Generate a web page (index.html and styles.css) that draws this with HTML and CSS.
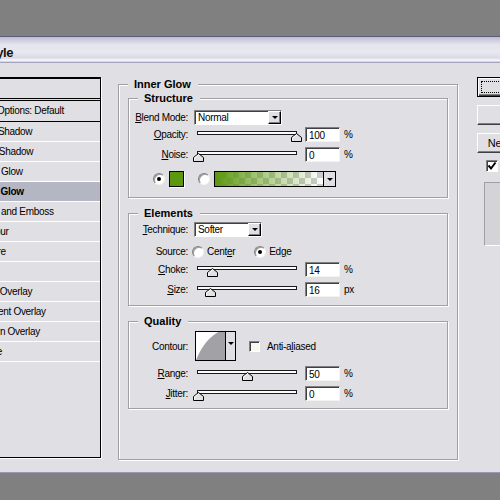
FILE: index.html
```html
<!DOCTYPE html>
<html lang="en">
<head>
  <meta charset="UTF-8" />
  <title>Layer Style</title>
  <link rel="stylesheet" href="styles.css">
</head>
<body>
  <div class="window">
    <div class="titlebar">Layer Style</div>

    <div class="content">
      <ul class="styles">
        <li class="head">Styles</li>
        <li class="blending">Blending Options: Default</li>
        <li class="fx">Drop Shadow</li>
        <li class="fx">Inner Shadow</li>
        <li class="fx">Outer Glow</li>
        <li class="fx selected">Inner Glow</li>
        <li class="fx">Bevel and Emboss</li>
        <li class="fx">Contour</li>
        <li class="fx">Texture</li>
        <li class="fx">Satin</li>
        <li class="fx">Color Overlay</li>
        <li class="fx">Gradient Overlay</li>
        <li class="fx">Pattern Overlay</li>
        <li class="fx">Stroke</li>
      </ul>

      <fieldset class="group main">
        <legend>Inner Glow</legend>

        <fieldset class="group structure">
          <legend>Structure</legend>
          <div class="row">
            <span class="lbl"><u>B</u>lend Mode:</span>
            <div class="select blend"><span class="value">Normal</span><span class="drop"><i class="arrow"></i></span></div>
          </div>
          <div class="row mt2">
            <span class="lbl"><u>O</u>pacity:</span>
            <div class="slider"><div class="track">
              <svg class="thumb" style="left: 100%" width="11" height="9" viewBox="0 0 11 9"><path d="M0.5 8.5V4.5L5.5 0.5L10.5 4.5V8.5Z" fill="#e2e2e2" stroke="#000"/><path d="M1.5 7.5V5L5.5 1.8" fill="none" stroke="#fff"/></svg>
            </div></div>
            <div class="field">100</div><span class="unit">%</span>
          </div>
          <div class="row mt5">
            <span class="lbl"><u>N</u>oise:</span>
            <div class="slider"><div class="track">
              <svg class="thumb" style="left: 0%" width="11" height="9" viewBox="0 0 11 9"><path d="M0.5 8.5V4.5L5.5 0.5L10.5 4.5V8.5Z" fill="#e2e2e2" stroke="#000"/><path d="M1.5 7.5V5L5.5 1.8" fill="none" stroke="#fff"/></svg>
            </div></div>
            <div class="field">0</div><span class="unit">%</span>
          </div>
          <div class="row color-row mt9">
            <span class="radio checked first"></span>
            <span class="swatch"></span>
            <span class="radio second"></span>
            <div class="gradient"><span class="ramp"></span><span class="drop"><i class="arrow"></i></span></div>
          </div>
        </fieldset>

        <fieldset class="group elements">
          <legend>Elements</legend>
          <div class="row">
            <span class="lbl"><u>T</u>echnique:</span>
            <div class="select technique"><span class="value">Softer</span><span class="drop"><i class="arrow"></i></span></div>
          </div>
          <div class="row mt7">
            <span class="lbl">Source:</span>
            <span class="radio source"></span><span class="opt">Cent<u>e</u>r</span>
            <span class="radio source edge checked"></span><span class="opt">Ed<u>g</u>e</span>
          </div>
          <div class="row mt3">
            <span class="lbl"><u>C</u>hoke:</span>
            <div class="slider"><div class="track">
              <svg class="thumb" style="left: 14%" width="11" height="9" viewBox="0 0 11 9"><path d="M0.5 8.5V4.5L5.5 0.5L10.5 4.5V8.5Z" fill="#e2e2e2" stroke="#000"/><path d="M1.5 7.5V5L5.5 1.8" fill="none" stroke="#fff"/></svg>
            </div></div>
            <div class="field">14</div><span class="unit">%</span>
          </div>
          <div class="row mt5">
            <span class="lbl"><u>S</u>ize:</span>
            <div class="slider"><div class="track">
              <svg class="thumb" style="left: 12%" width="11" height="9" viewBox="0 0 11 9"><path d="M0.5 8.5V4.5L5.5 0.5L10.5 4.5V8.5Z" fill="#e2e2e2" stroke="#000"/><path d="M1.5 7.5V5L5.5 1.8" fill="none" stroke="#fff"/></svg>
            </div></div>
            <div class="field">16</div><span class="unit">px</span>
          </div>
        </fieldset>

        <fieldset class="group quality">
          <legend>Quality</legend>
          <div class="row tall">
            <span class="lbl">Contour:</span>
            <div class="contour">
              <svg width="29" height="28" viewBox="0 0 29 28"><path d="M0 28C4 19 9 8 22 0H29V28Z" fill="#a2a2a6"/></svg>
              <span class="drop"><i class="arrow"></i></span>
            </div>
            <span class="check"></span><span class="opt">Anti-a<u>l</u>iased</span>
          </div>
          <div class="row mt5">
            <span class="lbl"><u>R</u>ange:</span>
            <div class="slider"><div class="track">
              <svg class="thumb" style="left: 50%" width="11" height="9" viewBox="0 0 11 9"><path d="M0.5 8.5V4.5L5.5 0.5L10.5 4.5V8.5Z" fill="#e2e2e2" stroke="#000"/><path d="M1.5 7.5V5L5.5 1.8" fill="none" stroke="#fff"/></svg>
            </div></div>
            <div class="field">50</div><span class="unit">%</span>
          </div>
          <div class="row mt5">
            <span class="lbl"><u>J</u>itter:</span>
            <div class="slider"><div class="track">
              <svg class="thumb" style="left: 0%" width="11" height="9" viewBox="0 0 11 9"><path d="M0.5 8.5V4.5L5.5 0.5L10.5 4.5V8.5Z" fill="#e2e2e2" stroke="#000"/><path d="M1.5 7.5V5L5.5 1.8" fill="none" stroke="#fff"/></svg>
            </div></div>
            <div class="field">0</div><span class="unit">%</span>
          </div>
        </fieldset>
      </fieldset>

      <div class="actions">
        <div class="btn default"><span class="focus">OK</span></div>
        <div class="btn">Cancel</div>
        <div class="btn">New Style...</div>
        <div class="preview-row"><span class="check on"><svg width="10" height="10" viewBox="0 0 10 10"><path d="M1.5 4.5L4 7.5L8.5 1.5" fill="none" stroke="#000" stroke-width="2"/></svg></span><span class="opt">Preview</span></div>
        <div class="preview"></div>
      </div>
    </div>
  </div>
</body>
</html>
```

FILE: styles.css
```css
html, body {
  margin: 0;
  height: 100%;
  overflow: hidden;
  background: #808080;
}
body {
  font-family: "Liberation Sans", Arial, sans-serif;
  font-size: 10px;
  letter-spacing: -0.3px;
  color: #000;
}
u {
  text-decoration-thickness: 1px;
  text-underline-offset: 1px;
}

/* window frame */
.window {
  margin: 36px 0 0 -70px;
  width: 660px;
  height: 437px;
  box-sizing: border-box;
  background: #e0dfe3;
  border-top: 1px solid #5c5c7a;
  border-bottom: 1px solid #9898b4;
}
.titlebar {
  height: 26px;
  box-sizing: border-box;
  padding: 8px 0 0 19px;
  font-size: 13px;
  font-weight: bold;
  letter-spacing: -0.5px;
  line-height: 16px;
  color: #111;
  background: linear-gradient(#bcbcd2, #e4e4ee 30%, #e8e8f0 60%, #dadae6 84%, #fafafc 93%, #c8c8dc);
  border-bottom: 1px solid #a4a4c0;
}
.content {
  display: flex;
  align-items: flex-start;
  padding-top: 14px;
}

/* styles list */
.styles {
  list-style: none;
  margin: 0 0 0 10px;
  padding: 0;
  width: 161px;
  height: 381px;
  box-sizing: border-box;
  border: 1px solid #000;
  border-top-width: 2px;
  box-shadow: 1px 1px 0 #fff;
  white-space: nowrap;
  overflow: hidden;
}
.styles li {
  height: 19px;
  line-height: 19px;
  border-bottom: 1px solid #fff;
}
.styles .head {
  border-bottom: 3px double #000;
}
.styles .blending {
  height: 20px;
  line-height: 20px;
  padding-left: 17px;
  border-bottom-color: #000;
}
.styles .fx {
  padding-left: 34px;
}
.styles .selected {
  background: #b5b6c4;
  font-weight: bold;
}

/* group boxes */
.group {
  margin: 0;
  padding: 0;
  min-width: 0;
  border: 1px solid #a0a0a0;
  box-shadow: inset 1px 1px 0 #fff, 1px 1px 0 #fff;
}
.group legend {
  margin-left: 9px;
  padding: 0 7px 0 6px;
  font-size: 11px;
  font-weight: bold;
  letter-spacing: 0;
  line-height: 13px;
  background: #e0dfe3;
}
.main {
  width: 340px;
  box-sizing: border-box;
  margin: 1px 0 0 17px;
  padding-bottom: 50px;
}
.structure,
.elements,
.quality {
  margin: 9px 9px 0;
}
.structure {
  margin-top: 1px;
  padding: 5px 0 10px;
}
.elements {
  padding: 2px 0 8px;
}
.quality {
  padding: 3px 0 7px;
}

/* rows */
.row {
  display: flex;
  align-items: center;
  height: 15px;
}
.row.tall {
  height: 30px;
}
.color-row {
  height: 16px;
}
.mt2 { margin-top: 2px; }
.mt3 { margin-top: 3px; }
.mt5 { margin-top: 5px; }
.mt7 { margin-top: 7px; }
.mt9 { margin-top: 9px; }

.lbl {
  width: 59px;
  text-align: right;
  flex: none;
}
.opt {
  margin-left: 3px;
}
.unit {
  margin-left: 4px;
}

/* controls */
.select {
  display: flex;
  height: 15px;
  box-sizing: border-box;
  margin-left: 6px;
  background: #fff;
  border: 1px solid;
  border-color: #808080 #fff #fff #808080;
  box-shadow: inset 1px 1px 0 #404040;
}
.select.blend { width: 88px; }
.select.technique { width: 68px; }
.select .value {
  flex: 1;
  padding: 1px 0 0 3px;
  line-height: 12px;
}
.drop {
  display: flex;
  align-items: center;
  justify-content: center;
  background: #e0dfe3;
}
.select .drop {
  width: 13px;
  box-sizing: border-box;
  border: 1px solid;
  border-color: #fff #000 #000 #fff;
  box-shadow: inset -1px -1px 0 #808080;
}
.arrow {
  width: 0;
  height: 0;
  border-left: 3px solid transparent;
  border-right: 3px solid transparent;
  border-top: 3px solid #000;
}

.slider {
  width: 110px;
  height: 15px;
  box-sizing: border-box;
  padding: 0 5px;
  margin-left: 4px;
}
.track {
  position: relative;
  margin-top: 4px;
  height: 4px;
  box-sizing: border-box;
  border: 1px solid #1a1a1a;
  background: #fbfbfb;
}
.thumb {
  position: absolute;
  top: 1px;
  margin-left: -5px;
  display: block;
}

.field {
  width: 35px;
  height: 15px;
  box-sizing: border-box;
  margin-left: 3px;
  padding: 1px 0 0 3px;
  line-height: 13px;
  background: #fff;
  border: 1px solid;
  border-color: #808080 #f4f4ee #f4f4ee #808080;
  box-shadow: inset 1px 1px 0 #404040;
}

.radio {
  position: relative;
  width: 12px;
  height: 12px;
  box-sizing: border-box;
  flex: none;
  border-radius: 50%;
  background: #fff;
  border: 1px solid;
  border-color: #808080 #f4f4ee #f4f4ee #808080;
  box-shadow: inset 1px 1px 0 #9a9a9a;
}
.radio.checked::after {
  content: "";
  position: absolute;
  left: 3px;
  top: 3px;
  width: 4px;
  height: 4px;
  border-radius: 50%;
  background: #000;
}
.radio.first { margin-left: 24px; }
.radio.second { margin-left: 14px; }
.radio.source { margin-left: 4px; }
.radio.edge { margin-left: 19px; }

.swatch {
  width: 15px;
  height: 16px;
  box-sizing: border-box;
  margin-left: 4px;
  background: #5b970f;
  border: 1px solid #000;
  box-shadow: 1px 1px 0 #fff;
}
.gradient {
  display: flex;
  width: 122px;
  height: 16px;
  box-sizing: border-box;
  margin-left: 4px;
  border: 1px solid #000;
}
.gradient .ramp {
  flex: 1;
  background:
    linear-gradient(90deg, #5b970f, rgba(91, 151, 15, 0.55) 40%, rgba(91, 151, 15, 0)),
    repeating-conic-gradient(#cdcdcd 0 25%, #fff 0 50%) 0 0 / 12px 12px;
}
.gradient .drop {
  width: 11px;
  border-left: 1px solid #000;
}

.contour {
  display: flex;
  width: 41px;
  height: 30px;
  box-sizing: border-box;
  margin-left: 7px;
  background: #fff;
  border: 1px solid #000;
}
.contour svg {
  display: block;
}
.contour .drop {
  flex: 1;
  border-left: 1px solid #000;
  align-items: flex-start;
  padding-top: 10px;
}

.check {
  display: flex;
  align-items: center;
  justify-content: center;
  width: 11px;
  height: 11px;
  box-sizing: border-box;
  margin-left: 13px;
  background: #f8f8f2;
  border: 1px solid;
  border-color: #808080 #fff #fff #808080;
  box-shadow: inset 1px 1px 0 #404040;
}
.quality .opt {
  margin-left: 7px;
}

/* buttons on the right */
.actions {
  display: flex;
  flex-direction: column;
  margin-left: 19px;
  width: 100px;
}
.btn {
  width: 80px;
  height: 20px;
  box-sizing: border-box;
  margin-bottom: 8px;
  font-size: 11px;
  letter-spacing: 0;
  line-height: 18px;
  text-align: center;
  white-space: nowrap;
  border: 1px solid;
  border-color: #fff #404040 #404040 #fff;
  box-shadow: inset -1px -1px 0 #808080;
}
.btn.default {
  border-color: #000;
  box-shadow: inset 1px 1px 0 #fff, inset -1px -1px 0 #404040, inset -2px -2px 0 #808080;
}
.btn .focus {
  display: block;
  margin: 3px;
  height: 12px;
  box-sizing: border-box;
  border: 1px dotted #000;
  line-height: 10px;
  color: #000;
}
.preview-row {
  display: flex;
  align-items: center;
  margin: -1px 0 0 9px;
  font-size: 11px;
  letter-spacing: 0;
}
.preview-row .check {
  width: 12px;
  height: 12px;
  margin-left: 0;
  background: #fff;
}
.preview-row .opt {
  margin-left: 6px;
}
.preview {
  width: 60px;
  height: 64px;
  margin: 10px 0 0 7px;
  box-sizing: border-box;
  background: #d4d4d7;
  border: 1px solid;
  border-color: #a0a0a4 #fff #fff #a0a0a4;
}
```
